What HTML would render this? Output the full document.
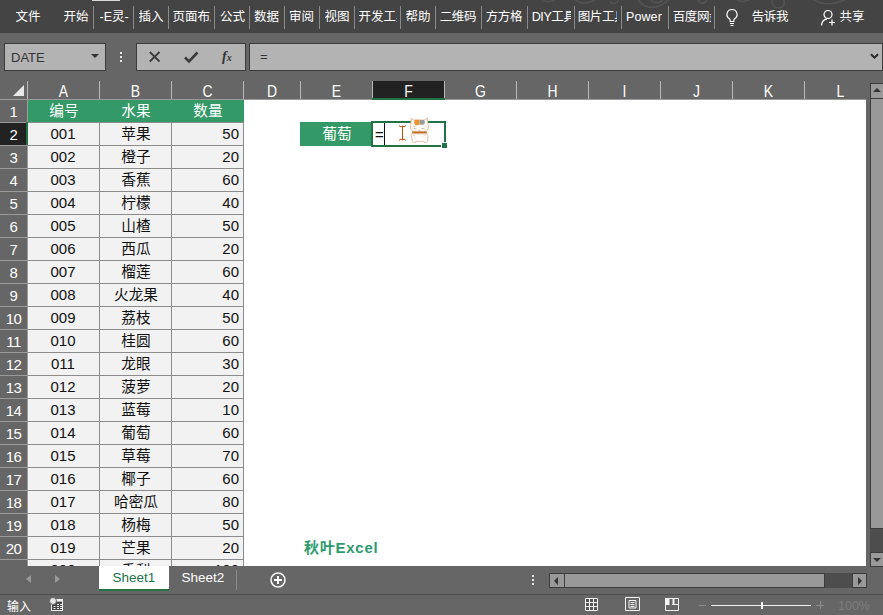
<!DOCTYPE html><html lang="zh"><head><meta charset="utf-8"><title>Excel</title><style>

html,body{margin:0;padding:0;}
body{width:883px;height:615px;overflow:hidden;background:#666666;font-family:"Liberation Sans","Noto Sans CJK SC",sans-serif;position:relative;}
div,span{box-sizing:border-box;}
.abs{position:absolute;}
#ribbon{left:0;top:0;width:883px;height:33px;background:#444444;}
.tab{position:absolute;top:8px;height:18px;line-height:18px;font-size:12.5px;color:#fff;white-space:nowrap;overflow:hidden;}
.sep{position:absolute;top:6px;width:1px;height:23px;background:#8a8a8a;}
#fbar{left:0;top:32px;width:883px;height:48px;}
.box{position:absolute;background:#b3b3b3;border:1px solid #3c3c3c;}
.ch{position:absolute;top:80px;height:19px;line-height:23px;font-size:15px;color:#fff;text-align:center;transform:scale(0.93,1.1);transform-origin:50% 17px;}
.cs{position:absolute;top:81px;width:1px;height:18px;background:#b8b8b8;}
.rh{position:absolute;left:0;width:27px;height:23px;line-height:24px;font-size:15px;letter-spacing:-0.5px;color:#fff;text-align:center;background:#666;border-bottom:1px solid #9a9a9a;}
.c{position:absolute;height:23px;line-height:23px;font-size:15px;color:#111;white-space:nowrap;}

</style></head><body>
<div id="ribbon" class="abs">
<div class="abs" style="left:92px;top:0;width:28px;height:1px;background:#d8d8d8"></div>
<svg class="abs" style="left:540px;top:0" width="343" height="14" viewBox="0 0 343 14"><g fill="none" stroke="#535353" stroke-width="1.6"><path d="M2 -2c2 4 8 5 14 1M34 -3c2 7 14 8 22 2M70 2c4 3 8 1 9-3M98 -2c3 10 18 14 30 2c3-3 4-5 4-7M110 -2c2 6 12 7 15-2M158 -1c1 5 6 6 9 1M196 -1c4 4 12 3 18-3M234 -4c-4 6-1 12 5 12c5 0 7-6 3-12M272 -2c8 8 26 8 38-2"/></g></svg>
<div class="tab" style="left:15.5px;width:28.0px">文件</div>
<div class="tab" style="left:63.5px;width:28.0px">开始</div>
<div class="tab" style="left:99.5px;width:32.0px">-E灵-</div>
<div class="tab" style="left:138.5px;width:28.0px">插入</div>
<div class="tab" style="left:172.5px;width:38.0px">页面布局</div>
<div class="tab" style="left:220.0px;width:28.0px">公式</div>
<div class="tab" style="left:254.0px;width:28.0px">数据</div>
<div class="tab" style="left:289.0px;width:28.0px">审阅</div>
<div class="tab" style="left:324.5px;width:28.0px">视图</div>
<div class="tab" style="left:358.5px;width:38.0px">开发工具</div>
<div class="tab" style="left:405.5px;width:28.0px">帮助</div>
<div class="tab" style="left:439.7px;width:40.0px;letter-spacing:-0.4px">二维码</div>
<div class="tab" style="left:485.7px;width:40.0px;letter-spacing:-0.4px">方方格</div>
<div class="tab" style="left:531.7px;width:39.0px;letter-spacing:-0.4px">DIY工具</div>
<div class="tab" style="left:577.7px;width:39.0px;letter-spacing:-0.4px">图片工具</div>
<div class="tab" style="left:626.0px;width:42.0px;letter-spacing:0.1px">Power</div>
<div class="tab" style="left:672.7px;width:38.5px;letter-spacing:-0.4px">百度网盘</div>
<div class="tab" style="left:751.7px;width:40.0px;letter-spacing:-0.4px">告诉我</div>
<div class="tab" style="left:839.5px;width:28.0px">共享</div>
<div class="sep" style="left:93px"></div>
<div class="sep" style="left:133px"></div>
<div class="sep" style="left:168px"></div>
<div class="sep" style="left:214px"></div>
<div class="sep" style="left:249px"></div>
<div class="sep" style="left:284px"></div>
<div class="sep" style="left:319px"></div>
<div class="sep" style="left:354px"></div>
<div class="sep" style="left:400px"></div>
<div class="sep" style="left:435px"></div>
<div class="sep" style="left:481px"></div>
<div class="sep" style="left:527px"></div>
<div class="sep" style="left:574px"></div>
<div class="sep" style="left:621px"></div>
<div class="sep" style="left:668px"></div>
<div class="sep" style="left:714px"></div>
<svg class="abs" style="left:724px;top:8px" width="16" height="20" viewBox="0 0 16 20"><path d="M8 1.5a5 5 0 0 0-2.6 9.3c.5.4.8 1 .8 1.7v1h3.6v-1c0-.7.3-1.3.8-1.7A5 5 0 0 0 8 1.5z" fill="none" stroke="#fff" stroke-width="1.2"/><path d="M6 15.5h4M6.5 17.5h3" stroke="#fff" stroke-width="1.1"/></svg>
<svg class="abs" style="left:819px;top:8px" width="20" height="20" viewBox="0 0 20 20"><circle cx="9" cy="6.5" r="4" fill="none" stroke="#fff" stroke-width="1.2"/><path d="M2.5 17.5c.3-3.5 2.5-6 5.5-6.6" fill="none" stroke="#fff" stroke-width="1.2"/><path d="M13 11.5v6M10 14.5h6" stroke="#fff" stroke-width="1.2"/></svg>
</div>
<div id="fbar" class="abs">
<div class="box" style="left:4px;top:11px;width:102px;height:28px"></div>
<div class="abs" style="left:11px;top:18px;font-size:13px;line-height:16px;color:#333">DATE</div>
<div class="abs" style="left:91px;top:22px;width:0;height:0;border-left:4px solid transparent;border-right:4px solid transparent;border-top:4px solid #333"></div>
<div class="abs" style="left:120px;top:20px;width:2px;height:2px;background:#e6e6e6;box-shadow:0 4px 0 #e6e6e6,0 8px 0 #e6e6e6"></div>
<div class="box" style="left:136px;top:11px;width:110px;height:28px"></div>
<svg class="abs" style="left:148px;top:18px" width="14" height="14" viewBox="0 0 14 14"><path d="M1.800 2l9.700 9.500M11.500 2l-9.700 9.500" stroke="#3a3a3a" stroke-width="1.800" fill="none"/></svg>
<svg class="abs" style="left:183px;top:18px" width="16" height="14" viewBox="0 0 16 14"><path d="M2 7.5l4 4L14.5 2.5" stroke="#3a3a3a" stroke-width="2.6" fill="none"/></svg>
<div class="abs" style="left:222px;top:16px;font-family:'Liberation Serif',serif;font-style:italic;font-weight:bold;font-size:14px;line-height:18px;color:#333">f<span style="font-size:10px">x</span></div>
<div class="box" style="left:249px;top:11px;width:634px;height:28px"></div>
<div class="abs" style="left:260px;top:17px;font-size:13px;line-height:16px;color:#333">=</div>
<svg class="abs" style="left:870px;top:21px" width="9" height="7" viewBox="0 0 9 7"><path d="M1 1.2l3.5 3.5 3.5-3.5" stroke="#2a2a2a" stroke-width="2" fill="none"/></svg>
</div>
<div class="abs" style="left:0;top:80px;width:867px;height:19px;background:#666"></div>
<div class="ch" style="left:28px;width:71px;">A</div>
<div class="cs" style="left:27px"></div>
<div class="ch" style="left:100px;width:71px;">B</div>
<div class="cs" style="left:99px"></div>
<div class="ch" style="left:172px;width:71px;">C</div>
<div class="cs" style="left:171px"></div>
<div class="ch" style="left:244px;width:56px;">D</div>
<div class="cs" style="left:243px"></div>
<div class="ch" style="left:301px;width:71px;">E</div>
<div class="cs" style="left:300px"></div>
<div class="abs" style="left:372px;top:81px;width:73px;height:17px;background:#222"></div>
<div class="ch" style="left:373px;width:71px;">F</div>
<div class="cs" style="left:372px"></div>
<div class="ch" style="left:445px;width:71px;">G</div>
<div class="cs" style="left:444px"></div>
<div class="ch" style="left:517px;width:71px;">H</div>
<div class="cs" style="left:516px"></div>
<div class="ch" style="left:589px;width:71px;">I</div>
<div class="cs" style="left:588px"></div>
<div class="ch" style="left:661px;width:71px;">J</div>
<div class="cs" style="left:660px"></div>
<div class="ch" style="left:733px;width:71px;">K</div>
<div class="cs" style="left:732px"></div>
<div class="ch" style="left:805px;width:71px;">L</div>
<div class="cs" style="left:804px"></div>
<div class="abs" style="left:13px;top:85px;width:0;height:0;border-left:11px solid transparent;border-bottom:11px solid #e8e8e8"></div>
<div class="abs" style="left:0;top:99px;width:867px;height:1px;background:#9a9a9a"></div>
<div class="abs" style="left:28px;top:100px;width:838px;height:466px;background:#fff"></div>
<div class="abs" style="left:28px;top:100px;width:216px;height:466px;background:#f2f2f2"></div>
<div class="abs" style="left:28px;top:100px;width:216px;height:22px;background:#339966"></div>
<div class="c" style="left:28px;top:100px;width:72px;text-align:center;color:#fff;font-size:14.67px">编号</div>
<div class="c" style="left:100px;top:100px;width:72px;text-align:center;color:#fff;font-size:14.67px">水果</div>
<div class="c" style="left:172px;top:100px;width:72px;text-align:center;color:#fff;font-size:14.67px">数量</div>
<div class="rh" style="top:100px;">1</div>
<div class="rh" style="top:123px;background:#222;">2</div>
<div class="rh" style="top:146px;">3</div>
<div class="rh" style="top:169px;">4</div>
<div class="rh" style="top:192px;">5</div>
<div class="rh" style="top:215px;">6</div>
<div class="rh" style="top:238px;">7</div>
<div class="rh" style="top:261px;">8</div>
<div class="rh" style="top:284px;">9</div>
<div class="rh" style="top:307px;">10</div>
<div class="rh" style="top:330px;">11</div>
<div class="rh" style="top:353px;">12</div>
<div class="rh" style="top:376px;">13</div>
<div class="rh" style="top:399px;">14</div>
<div class="rh" style="top:422px;">15</div>
<div class="rh" style="top:445px;">16</div>
<div class="rh" style="top:468px;">17</div>
<div class="rh" style="top:491px;">18</div>
<div class="rh" style="top:514px;">19</div>
<div class="rh" style="top:537px;">20</div>
<div class="rh" style="top:560px;">21</div>
<div class="abs" style="left:27px;top:100px;width:1px;height:466px;background:#9a9a9a"></div>
<div class="abs" style="left:26px;top:122px;width:2px;height:23px;background:#217346"></div>
<div class="c" style="left:27px;top:122px;width:72px;text-align:center">001</div>
<div class="c" style="left:100px;top:123px;width:72px;text-align:center;font-size:14.67px">苹果</div>
<div class="c" style="left:171px;top:122px;width:68px;text-align:right">50</div>
<div class="c" style="left:27px;top:145px;width:72px;text-align:center">002</div>
<div class="c" style="left:100px;top:146px;width:72px;text-align:center;font-size:14.67px">橙子</div>
<div class="c" style="left:171px;top:145px;width:68px;text-align:right">20</div>
<div class="c" style="left:27px;top:168px;width:72px;text-align:center">003</div>
<div class="c" style="left:100px;top:169px;width:72px;text-align:center;font-size:14.67px">香蕉</div>
<div class="c" style="left:171px;top:168px;width:68px;text-align:right">60</div>
<div class="c" style="left:27px;top:191px;width:72px;text-align:center">004</div>
<div class="c" style="left:100px;top:192px;width:72px;text-align:center;font-size:14.67px">柠檬</div>
<div class="c" style="left:171px;top:191px;width:68px;text-align:right">40</div>
<div class="c" style="left:27px;top:214px;width:72px;text-align:center">005</div>
<div class="c" style="left:100px;top:215px;width:72px;text-align:center;font-size:14.67px">山楂</div>
<div class="c" style="left:171px;top:214px;width:68px;text-align:right">50</div>
<div class="c" style="left:27px;top:237px;width:72px;text-align:center">006</div>
<div class="c" style="left:100px;top:238px;width:72px;text-align:center;font-size:14.67px">西瓜</div>
<div class="c" style="left:171px;top:237px;width:68px;text-align:right">20</div>
<div class="c" style="left:27px;top:260px;width:72px;text-align:center">007</div>
<div class="c" style="left:100px;top:261px;width:72px;text-align:center;font-size:14.67px">榴莲</div>
<div class="c" style="left:171px;top:260px;width:68px;text-align:right">60</div>
<div class="c" style="left:27px;top:283px;width:72px;text-align:center">008</div>
<div class="c" style="left:100px;top:284px;width:72px;text-align:center;font-size:14.67px">火龙果</div>
<div class="c" style="left:171px;top:283px;width:68px;text-align:right">40</div>
<div class="c" style="left:27px;top:306px;width:72px;text-align:center">009</div>
<div class="c" style="left:100px;top:307px;width:72px;text-align:center;font-size:14.67px">荔枝</div>
<div class="c" style="left:171px;top:306px;width:68px;text-align:right">50</div>
<div class="c" style="left:27px;top:329px;width:72px;text-align:center">010</div>
<div class="c" style="left:100px;top:330px;width:72px;text-align:center;font-size:14.67px">桂圆</div>
<div class="c" style="left:171px;top:329px;width:68px;text-align:right">60</div>
<div class="c" style="left:27px;top:352px;width:72px;text-align:center">011</div>
<div class="c" style="left:100px;top:353px;width:72px;text-align:center;font-size:14.67px">龙眼</div>
<div class="c" style="left:171px;top:352px;width:68px;text-align:right">30</div>
<div class="c" style="left:27px;top:375px;width:72px;text-align:center">012</div>
<div class="c" style="left:100px;top:376px;width:72px;text-align:center;font-size:14.67px">菠萝</div>
<div class="c" style="left:171px;top:375px;width:68px;text-align:right">20</div>
<div class="c" style="left:27px;top:398px;width:72px;text-align:center">013</div>
<div class="c" style="left:100px;top:399px;width:72px;text-align:center;font-size:14.67px">蓝莓</div>
<div class="c" style="left:171px;top:398px;width:68px;text-align:right">10</div>
<div class="c" style="left:27px;top:421px;width:72px;text-align:center">014</div>
<div class="c" style="left:100px;top:422px;width:72px;text-align:center;font-size:14.67px">葡萄</div>
<div class="c" style="left:171px;top:421px;width:68px;text-align:right">60</div>
<div class="c" style="left:27px;top:444px;width:72px;text-align:center">015</div>
<div class="c" style="left:100px;top:445px;width:72px;text-align:center;font-size:14.67px">草莓</div>
<div class="c" style="left:171px;top:444px;width:68px;text-align:right">70</div>
<div class="c" style="left:27px;top:467px;width:72px;text-align:center">016</div>
<div class="c" style="left:100px;top:468px;width:72px;text-align:center;font-size:14.67px">椰子</div>
<div class="c" style="left:171px;top:467px;width:68px;text-align:right">60</div>
<div class="c" style="left:27px;top:490px;width:72px;text-align:center">017</div>
<div class="c" style="left:100px;top:491px;width:72px;text-align:center;font-size:14.67px">哈密瓜</div>
<div class="c" style="left:171px;top:490px;width:68px;text-align:right">80</div>
<div class="c" style="left:27px;top:513px;width:72px;text-align:center">018</div>
<div class="c" style="left:100px;top:514px;width:72px;text-align:center;font-size:14.67px">杨梅</div>
<div class="c" style="left:171px;top:513px;width:68px;text-align:right">50</div>
<div class="c" style="left:27px;top:536px;width:72px;text-align:center">019</div>
<div class="c" style="left:100px;top:537px;width:72px;text-align:center;font-size:14.67px">芒果</div>
<div class="c" style="left:171px;top:536px;width:68px;text-align:right">20</div>
<div class="c" style="left:27px;top:558px;width:72px;text-align:center">020</div>
<div class="c" style="left:100px;top:560px;width:72px;text-align:center;font-size:14.67px">香梨</div>
<div class="c" style="left:171px;top:558px;width:68px;text-align:right">100</div>
<div class="abs" style="left:28px;top:122px;width:216px;height:1px;background:#8c8c8c"></div>
<div class="abs" style="left:28px;top:145px;width:216px;height:1px;background:#8c8c8c"></div>
<div class="abs" style="left:28px;top:168px;width:216px;height:1px;background:#8c8c8c"></div>
<div class="abs" style="left:28px;top:191px;width:216px;height:1px;background:#8c8c8c"></div>
<div class="abs" style="left:28px;top:214px;width:216px;height:1px;background:#8c8c8c"></div>
<div class="abs" style="left:28px;top:237px;width:216px;height:1px;background:#8c8c8c"></div>
<div class="abs" style="left:28px;top:260px;width:216px;height:1px;background:#8c8c8c"></div>
<div class="abs" style="left:28px;top:283px;width:216px;height:1px;background:#8c8c8c"></div>
<div class="abs" style="left:28px;top:306px;width:216px;height:1px;background:#8c8c8c"></div>
<div class="abs" style="left:28px;top:329px;width:216px;height:1px;background:#8c8c8c"></div>
<div class="abs" style="left:28px;top:352px;width:216px;height:1px;background:#8c8c8c"></div>
<div class="abs" style="left:28px;top:375px;width:216px;height:1px;background:#8c8c8c"></div>
<div class="abs" style="left:28px;top:398px;width:216px;height:1px;background:#8c8c8c"></div>
<div class="abs" style="left:28px;top:421px;width:216px;height:1px;background:#8c8c8c"></div>
<div class="abs" style="left:28px;top:444px;width:216px;height:1px;background:#8c8c8c"></div>
<div class="abs" style="left:28px;top:467px;width:216px;height:1px;background:#8c8c8c"></div>
<div class="abs" style="left:28px;top:490px;width:216px;height:1px;background:#8c8c8c"></div>
<div class="abs" style="left:28px;top:513px;width:216px;height:1px;background:#8c8c8c"></div>
<div class="abs" style="left:28px;top:536px;width:216px;height:1px;background:#8c8c8c"></div>
<div class="abs" style="left:28px;top:559px;width:216px;height:1px;background:#8c8c8c"></div>
<div class="abs" style="left:99px;top:122px;width:1px;height:444px;background:#8c8c8c"></div>
<div class="abs" style="left:171px;top:122px;width:1px;height:444px;background:#8c8c8c"></div>
<div class="abs" style="left:243px;top:122px;width:1px;height:444px;background:#8c8c8c"></div>
<div class="abs" style="left:372px;top:98px;width:73px;height:2px;background:#217346"></div>
<div class="abs" style="left:300px;top:122px;width:72px;height:24px;background:#339966"></div>
<div class="c" style="left:301px;top:123px;width:72px;text-align:center;color:#fff;font-size:14.67px">葡萄</div>
<div class="abs" style="left:371px;top:121px;width:75px;height:26px;border:2px solid #217346;background:#fff"></div>
<div class="abs" style="left:441px;top:142px;width:6px;height:6px;background:#217346;border-left:1px solid #fff;border-top:1px solid #fff"></div>
<div class="c" style="left:375px;top:123px;color:#111">=</div>
<div class="abs" style="left:384px;top:123px;width:1px;height:22px;background:#111"></div>
<svg class="abs" style="left:398px;top:124px" width="9" height="18" viewBox="0 0 9 18"><path d="M1 1.5l2 1.5 1.5-1 1.5 1 2-1.5M4.5 2v14M1 16.5l2-1.5 1.5 1 1.5-1 2 1.5" fill="none" stroke="#b4540a" stroke-width="1"/></svg>
<svg class="abs" style="left:409px;top:117px" width="21" height="27" viewBox="0 0 21 27">
<path d="M2.3 1.2L5.2 3.2h9.6L18.3 1.2l1 8.3c.2 2.600-1.200 4.500-3 5.200H4.500c-1.800-.7-3.200-2.600-3-5.200z" fill="#fdf8f3" stroke="#dcb9a0" stroke-width="0.9"/>
<path d="M5.600 3.300c-.8 1.500-.6 3.700.5 4.500 1 .7 3 .4 4.500-.2V2.800H6z" fill="#e8962e"/>
<path d="M10.600 2.800h3.500c1.300.5 2 1.800 1.800 3-.3 1.400-1.300 2-2.500 2-1 0-2-.1-2.800-.2z" fill="#9c9c9c"/>
<path d="M4.500 9.200c.5.500 1.500.5 2 0M4.800 11.500h2.600M12.500 11.500h2.800" stroke="#b9aaa2" stroke-width="0.7" fill="none"/>
<path d="M9.800 13.300l.7.700.7-.7" stroke="#8a7a70" stroke-width="0.6" fill="none"/>
<path d="M3 14.600h15l-.3 2.100H3.300z" fill="#c9701f"/>
<path d="M2.200 18.500c0-1.200.8-1.800 1.800-1.800h13c1 0 1.800.6 1.800 1.800v4.500c0 1.700-1 2.600-2.300 2.600h-1l-.3-1h-8.400l-.3 1h-1c-1.300 0-2.300-.9-2.300-2.600z" fill="#fcfcfc" stroke="#dcb9a0" stroke-width="0.9"/>
<path d="M4 17.500l2 2M17 17.500l-2 2" stroke="#dcb9a0" stroke-width="0.8" fill="none"/>
</svg>
<div class="abs" style="left:304px;top:539px;font-size:15px;line-height:18px;font-weight:bold;color:#2e9b6e;letter-spacing:0.75px">秋叶Excel</div>
<div class="abs" style="left:0;top:566px;width:883px;height:26px;background:#666"></div>
<div class="abs" style="left:26px;top:575px;width:0;height:0;border-top:4px solid transparent;border-bottom:4px solid transparent;border-right:5px solid #9a9a9a"></div>
<div class="abs" style="left:55px;top:575px;width:0;height:0;border-top:4px solid transparent;border-bottom:4px solid transparent;border-left:5px solid #9a9a9a"></div>
<div class="abs" style="left:99px;top:566px;width:70px;height:25px;background:#fff;border-bottom:2px solid #217346;color:#217346;font-size:13.5px;line-height:24px;text-align:center">Sheet1</div>
<div class="abs" style="left:170px;top:566px;width:66px;height:24px;color:#fff;font-size:13.5px;line-height:24px;text-align:center">Sheet2</div>
<div class="abs" style="left:236px;top:570px;width:1px;height:20px;background:#8a8a8a"></div>
<svg class="abs" style="left:269px;top:571px" width="18" height="18" viewBox="0 0 18 18"><circle cx="9" cy="9" r="7" fill="none" stroke="#fff" stroke-width="1.5"/><path d="M9 5v8M5 9h8" stroke="#fff" stroke-width="2"/></svg>
<div class="abs" style="left:532px;top:575px;width:2px;height:2px;background:#e6e6e6;box-shadow:0 4px 0 #e6e6e6,0 8px 0 #e6e6e6"></div>
<div class="abs" style="left:549px;top:573px;width:317px;height:15px;background:#4d4d4d"></div>
<div class="abs" style="left:549px;top:573px;width:16px;height:15px;background:#999;border:1px solid #3c3c3c"></div>
<div class="abs" style="left:554px;top:577px;width:0;height:0;border-top:4px solid transparent;border-bottom:4px solid transparent;border-right:4px solid #333"></div>
<div class="abs" style="left:564px;top:573px;width:261px;height:15px;background:#999;border:1px solid #3c3c3c"></div>
<div class="abs" style="left:852px;top:573px;width:15px;height:15px;background:#999;border:1px solid #3c3c3c"></div>
<div class="abs" style="left:858px;top:577px;width:0;height:0;border-top:4px solid transparent;border-bottom:4px solid transparent;border-left:4px solid #333"></div>
<div class="abs" style="left:866px;top:80px;width:17px;height:486px;background:#666"></div>
<div class="abs" style="left:870px;top:83px;width:13px;height:482px;background:#4d4d4d"></div>
<div class="abs" style="left:870px;top:83px;width:14px;height:16px;background:#999;border:1px solid #3c3c3c"></div>
<div class="abs" style="left:873px;top:88px;width:0;height:0;border-left:4px solid transparent;border-right:4px solid transparent;border-bottom:4px solid #333"></div>
<div class="abs" style="left:870px;top:98px;width:14px;height:431px;background:#999;border:1px solid #3c3c3c"></div>
<div class="abs" style="left:870px;top:552px;width:14px;height:15px;background:#999;border:1px solid #3c3c3c"></div>
<div class="abs" style="left:873px;top:558px;width:0;height:0;border-left:4px solid transparent;border-right:4px solid transparent;border-top:4px solid #333"></div>
<div class="abs" style="left:0;top:594px;width:883px;height:21px;background:#666;border-top:1px solid #4d4d4d"></div>
<div class="abs" style="left:7px;top:598.500px;font-size:12px;line-height:16px;color:#fff">输入</div>
<svg class="abs" style="left:49px;top:597px" width="16" height="16" viewBox="0 0 16 16"><rect x="2.5" y="2.5" width="11" height="11" fill="#474747" stroke="#efefef" stroke-width="1"/><rect x="2" y="2" width="12" height="2.6" fill="#efefef"/><path d="M8 7.5h2M11 7.5h2M4.500 9.500h2M8 9.500h2M11 9.500h2M4.500 11.500h2M8 11.500h2M11 11.500h2" stroke="#efefef" stroke-width="1"/><circle cx="4" cy="4" r="3.500" fill="#e4e4e4" stroke="#666" stroke-width="1"/></svg>
<svg class="abs" style="left:585px;top:598px" width="13" height="13" viewBox="0 0 13 13"><rect x="0" y="0" width="13" height="13" fill="#555"/><path d="M.5.5h12v12H.5zM.5 4.500h12M.5 8.500h12M4.500.5v12M8.500.5v12" fill="none" stroke="#f2f2f2" stroke-width="1"/></svg>
<svg class="abs" style="left:625px;top:597px" width="15" height="14" viewBox="0 0 15 14"><path d="M.5.5h14v13H.5z" fill="none" stroke="#f2f2f2" stroke-width="1"/><path d="M4 3.500h7v7.500h-7z" fill="none" stroke="#f2f2f2" stroke-width="1"/><path d="M5.500 5.500h4M5.500 7.500h4M5.500 9.500h4" fill="none" stroke="#f2f2f2" stroke-width="1"/></svg>
<svg class="abs" style="left:665px;top:598px" width="14" height="13" viewBox="0 0 14 13"><path d="M.5.5h13v12H.5z" fill="none" stroke="#f2f2f2" stroke-width="1"/><path d="M0 0h4.500v7H0zM7.500 0h2v7h-2z" fill="#f2f2f2"/><path d="M7.500 6.500h6" stroke="#f2f2f2" stroke-width="1"/></svg>
<div class="abs" style="left:699px;top:605px;width:7px;height:1px;background:#8c8c8c"></div>
<div class="abs" style="left:711px;top:605px;width:100px;height:1px;background:#f0f0f0"></div>
<div class="abs" style="left:761px;top:602px;width:2px;height:7px;background:#f0f0f0"></div>
<div class="abs" style="left:816px;top:605px;width:8px;height:1px;background:#8c8c8c"></div>
<div class="abs" style="left:820px;top:601px;width:1px;height:8px;background:#8c8c8c"></div>
<div class="abs" style="left:838px;top:598px;font-size:12.500px;line-height:16px;color:#7c7c7c">100%</div>
</body></html>
